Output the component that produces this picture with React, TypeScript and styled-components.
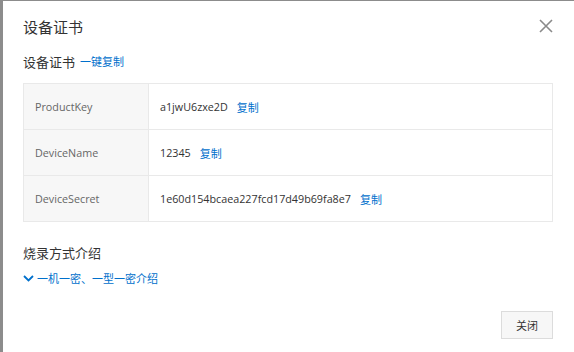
import { Fragment } from "react";
import styled, { createGlobalStyle } from "styled-components";

const GlobalStyle = createGlobalStyle`
  html, body {
    margin: 0;
    padding: 0;
    background: #fff;
  }
  body {
    font-family: "Open Sans", "Noto Sans CJK SC", sans-serif;
  }
`;

const Backdrop = styled.div`
  display: flex;
  width: 574px;
  height: 352px;
  background: #8c8c8c;
  padding: 1px 0 0 3px;
  box-sizing: border-box;
  overflow: hidden;
`;

const Dialog = styled.div`
  display: flex;
  flex-direction: column;
  flex: 1;
  background: #fff;
  padding: 0 21px 0 20px;
  font-family: "Open Sans", "Noto Sans CJK SC", sans-serif;
`;

const Header = styled.div`
  display: flex;
  align-items: center;
  justify-content: space-between;
  height: 50px;
`;

const Title = styled.h1`
  margin: 0;
  font-size: 15px;
  font-weight: 400;
  color: #333;
  font-family: "Noto Sans CJK SC", sans-serif;
`;

const CloseButton = styled.button`
  width: 14px;
  height: 14px;
  padding: 0;
  border: 0;
  background: none;
  display: flex;
  cursor: pointer;
`;

const SectionTitle = styled.div`
  display: flex;
  align-items: center;
  gap: 5px;
  height: 20px;
  font-size: 13px;
  color: #333;
  font-family: "Noto Sans CJK SC", sans-serif;
`;

const Link = styled.a`
  font-size: 11px;
  color: #0070cc;
  text-decoration: none;
  cursor: pointer;
  font-family: "Noto Sans CJK SC", sans-serif;
`;

const Table = styled.div`
  display: grid;
  grid-template-columns: 125px 1fr;
  margin-top: 12px;
  border: 1px solid #e9e9e9;
  border-bottom: 0;
`;

const LabelCell = styled.div`
  display: flex;
  align-items: center;
  height: 45px;
  padding-left: 11px;
  background: #f7f7f7;
  border-right: 1px solid #e9e9e9;
  border-bottom: 1px solid #e9e9e9;
  font-size: 10.75px;
  color: #666;
`;

const ValueCell = styled.div`
  display: flex;
  align-items: center;
  gap: 9px;
  height: 45px;
  padding-left: 11px;
  border-bottom: 1px solid #e9e9e9;
  font-size: 10.75px;
  color: #333;
`;

const IntroTitle = styled.div`
  margin-top: 21px;
  font-size: 13px;
  color: #333;
  font-family: "Noto Sans CJK SC", sans-serif;
`;

const IntroLink = styled(Link)`
  display: flex;
  align-items: center;
  gap: 3px;
  margin-top: 8px;
`;

const Footer = styled.div`
  display: flex;
  justify-content: flex-end;
  margin-top: auto;
  margin-bottom: 13px;
`;

const Button = styled.button`
  width: 52px;
  height: 28px;
  border: 1px solid #dcdcdc;
  background: #f7f7f7;
  font-size: 11px;
  color: #333;
  font-family: "Noto Sans CJK SC", sans-serif;
  cursor: pointer;
`;

const rows = [
  { label: "ProductKey", value: "a1jwU6zxe2D" },
  { label: "DeviceName", value: "12345" },
  { label: "DeviceSecret", value: "1e60d154bcaea227fcd17d49b69fa8e7" },
];

export default function App() {
  return (
    <>
      <GlobalStyle />
      <Backdrop>
        <Dialog>
          <Header>
            <Title>设备证书</Title>
            <CloseButton aria-label="close">
              <svg width="14" height="14" viewBox="0 0 14 14">
                <path
                  d="M1 1L13 13M13 1L1 13"
                  stroke="#8a8a8a"
                  strokeWidth="1.6"
                  fill="none"
                />
              </svg>
            </CloseButton>
          </Header>
          <SectionTitle>
            设备证书
            <Link>一键复制</Link>
          </SectionTitle>
          <Table>
            {rows.map((row) => (
              <Fragment key={row.label}>
                <LabelCell>{row.label}</LabelCell>
                <ValueCell>
                  {row.value}
                  <Link>复制</Link>
                </ValueCell>
              </Fragment>
            ))}
          </Table>
          <IntroTitle>烧录方式介绍</IntroTitle>
          <IntroLink>
            <svg width="11" height="7" viewBox="0 0 11 7">
              <path
                d="M1 1L5.5 5.5L10 1"
                stroke="#0070cc"
                strokeWidth="1.8"
                fill="none"
              />
            </svg>
            一机一密、一型一密介绍
          </IntroLink>
          <Footer>
            <Button>关闭</Button>
          </Footer>
        </Dialog>
      </Backdrop>
    </>
  );
}
